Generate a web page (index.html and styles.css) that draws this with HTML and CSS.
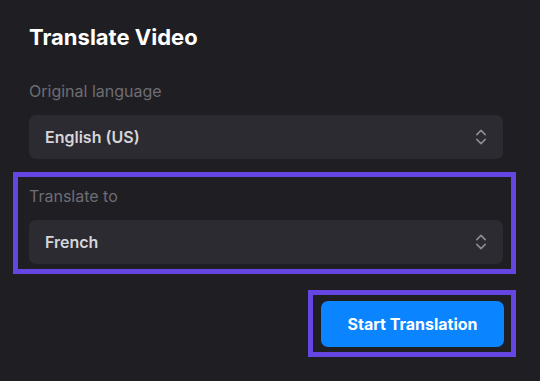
FILE: index.html
```html
<!DOCTYPE html>
<html lang="en">
<head>
<meta charset="utf-8">
<title>Translate Video</title>
<link rel="stylesheet" href="styles.css">
</head>
<body>
<main class="panel">
  <h1 class="title">Translate Video</h1>

  <div class="field">
    <div class="label">Original language</div>
    <div class="select">
      <span class="value">English (US)</span>
      <svg class="chev" width="12" height="18" viewBox="0 0 12 18" aria-hidden="true">
        <path d="M1.8 6.6 L6 2.4 L10.2 6.6" />
        <path d="M1.8 11.4 L6 15.6 L10.2 11.4" />
      </svg>
    </div>
  </div>

  <div class="field highlight">
    <div class="label">Translate to</div>
    <div class="select">
      <span class="value">French</span>
      <svg class="chev" width="12" height="18" viewBox="0 0 12 18" aria-hidden="true">
        <path d="M1.8 6.6 L6 2.4 L10.2 6.6" />
        <path d="M1.8 11.4 L6 15.6 L10.2 11.4" />
      </svg>
    </div>
  </div>

  <div class="actions">
    <div class="btn-frame">
      <button class="btn" type="button">Start Translation</button>
    </div>
  </div>
</main>
</body>
</html>
```

FILE: styles.css
```css
html, body {
  margin: 0;
  padding: 0;
  background: #1f1e23;
}

body {
  font-family: Inter, "Noto Sans", "Liberation Sans", sans-serif;
  width: 540px;
  height: 381px;
  overflow: hidden;
}

.panel {
  padding: 23px 37px 0 29px;
}

.title {
  margin: 0 0 30px;
  font-size: 22px;
  line-height: 28px;
  font-weight: 700;
  color: #ffffff;
}

.field {
  display: flex;
  flex-direction: column;
  gap: 14px;
}

.label {
  font-size: 16px;
  line-height: 20px;
  color: #6e6d73;
}

.select {
  height: 44px;
  box-sizing: border-box;
  background: #2c2b31;
  border-radius: 7px;
  display: flex;
  align-items: center;
  justify-content: space-between;
  padding: 0 16px 0 16px;
}

.value {
  font-size: 16px;
  font-weight: 600;
  color: #d6d6da;
}

.chev {
  display: block;
}

.chev path {
  fill: none;
  stroke: #8d8c92;
  stroke-width: 1.6;
  stroke-linecap: round;
  stroke-linejoin: round;
}

.highlight {
  margin: 13px -13px 0 -16px;
  padding: 9px 8px 5px 11px;
  border: 5px solid #6546e2;
}

.actions {
  display: flex;
  justify-content: flex-end;
  margin: 16px -13px 0 0;
}

.btn-frame {
  border: 5px solid #6546e2;
  padding: 6px 7px 5px 8px;
}

.btn {
  display: block;
  width: 183px;
  height: 46px;
  border: 0;
  border-radius: 7px;
  background: #0a84ff;
  color: #ffffff;
  font-family: Inter, "Noto Sans", "Liberation Sans", sans-serif;
  font-size: 16px;
  font-weight: 700;
  cursor: pointer;
}
```
